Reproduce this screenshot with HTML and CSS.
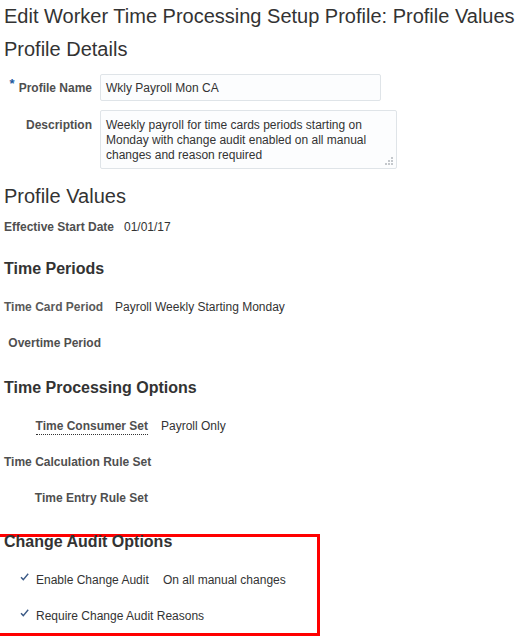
FILE: index.html
```html
<!DOCTYPE html>
<html lang="en">
<head>
<meta charset="utf-8">
<title>Edit Worker Time Processing Setup Profile</title>
<link rel="stylesheet" href="styles.css">
</head>
<body>
<main class="page">
  <h1 class="page-title">Edit Worker Time Processing Setup Profile: Profile Values</h1>

  <h2 class="section-title details-title">Profile Details</h2>
  <div class="form-grid">
    <label class="form-label"><span class="req">*</span>Profile Name</label>
    <div class="input-box">Wkly Payroll Mon CA</div>
    <label class="form-label desc-label">Description</label>
    <div class="textarea-box">Weekly payroll for time cards periods starting on Monday with change audit enabled on all manual changes and reason required
      <svg class="grip" width="8" height="8" viewBox="0 0 8 8"><rect x="6" y="0" width="2" height="2"/><rect x="3" y="3" width="2" height="2"/><rect x="6" y="3" width="2" height="2"/><rect x="0" y="6" width="2" height="2"/><rect x="3" y="6" width="2" height="2"/><rect x="6" y="6" width="2" height="2"/></svg>
    </div>
  </div>

  <h2 class="section-title values-title">Profile Values</h2>
  <div class="ro-grid eff-grid">
    <span class="ro-label bold">Effective Start Date</span>
    <span class="ro-value">01/01/17</span>
  </div>

  <h3 class="sub-title periods-title">Time Periods</h3>
  <div class="ro-grid periods-grid">
    <span class="ro-label bold light">Time Card Period</span>
    <span class="ro-value">Payroll Weekly Starting Monday</span>
    <span class="ro-label bold">Overtime Period</span>
    <span class="ro-value"></span>
  </div>

  <h3 class="sub-title options-title">Time Processing Options</h3>
  <div class="ro-grid options-grid">
    <span class="ro-label bold"><span class="dotted">Time Consumer Set</span></span>
    <span class="ro-value">Payroll Only</span>
    <span class="ro-label bold">Time Calculation Rule Set</span>
    <span class="ro-value"></span>
    <span class="ro-label bold">Time Entry Rule Set</span>
    <span class="ro-value"></span>
  </div>

  <section class="audit">
    <div class="highlight"></div>
    <h3 class="sub-title audit-title">Change Audit Options</h3>
    <div class="audit-grid">
      <svg class="check" width="9" height="8" viewBox="0 0 9 8"><path d="M1 4.2 L3.3 6.6 L8.2 0.8" fill="none" stroke="#3b5a86" stroke-width="1.4"/></svg>
      <span class="audit-label">Enable Change Audit</span>
      <span class="audit-value">On all manual changes</span>
      <svg class="check" width="9" height="8" viewBox="0 0 9 8"><path d="M1 4.2 L3.3 6.6 L8.2 0.8" fill="none" stroke="#3b5a86" stroke-width="1.4"/></svg>
      <span class="audit-label wide">Require Change Audit Reasons</span>
    </div>
  </section>
</main>
</body>
</html>
```

FILE: styles.css
```css
html, body {
  margin: 0;
  padding: 0;
  background: #ffffff;
  overflow: hidden;
}

body {
  font-family: "Liberation Sans", Arial, sans-serif;
  color: #333333;
  width: 523px;
  height: 636px;
}

.page {
  padding: 0 0 0 4px;
}

.page-title {
  margin: 4px 0 0;
  font-size: 20px;
  line-height: 24px;
  font-weight: normal;
  color: #333333;
  white-space: nowrap;
}

.section-title {
  margin: 0;
  font-size: 20px;
  line-height: 24px;
  font-weight: normal;
  color: #333333;
}

.details-title {
  margin-top: 9px;
}

.form-grid {
  display: grid;
  grid-template-columns: 88px auto;
  column-gap: 8px;
  row-gap: 9px;
  margin-top: 13px;
  justify-items: start;
}

.form-label {
  justify-self: end;
  font-size: 12px;
  font-weight: bold;
  color: #4f4f4f;
  line-height: 15px;
  padding-top: 6px;
  white-space: nowrap;
}

.desc-label {
  padding-top: 8px;
}

.req {
  color: #1c5a9e;
  font-size: 13px;
  position: relative;
  top: -4px;
  margin-right: 4px;
}

.input-box {
  box-sizing: border-box;
  width: 281px;
  height: 27px;
  border: 1px solid #dfe4e8;
  border-radius: 2px;
  background: #fcfdfe;
  font-size: 12px;
  line-height: 15px;
  padding: 6px 5px;
  color: #333333;
}

.textarea-box {
  position: relative;
  box-sizing: border-box;
  width: 297px;
  height: 59px;
  border: 1px solid #dfe4e8;
  border-radius: 2px;
  background: #fcfdfe;
  font-size: 12px;
  line-height: 15px;
  padding: 7px 5px;
  color: #333333;
}

.grip {
  position: absolute;
  right: 3px;
  bottom: 3px;
  fill: #c4c8cc;
}

.values-title {
  margin-top: 15px;
}

.ro-grid {
  display: grid;
  row-gap: 20px;
  font-size: 12px;
  line-height: 16px;
}

.ro-label {
  text-align: right;
  color: #4f4f4f;
  white-space: nowrap;
}

.ro-label.bold {
  font-weight: bold;
}

.ro-label.light {
  color: #5a5a5a;
}

.ro-value {
  color: #333333;
  white-space: nowrap;
}

.eff-grid {
  grid-template-columns: 109px auto;
  column-gap: 11px;
  margin-top: 11px;
}

.sub-title {
  margin: 0;
  font-size: 16px;
  line-height: 20px;
  font-weight: bold;
  color: #333333;
}

.periods-title {
  margin-top: 24px;
}

.periods-grid {
  grid-template-columns: 97px auto;
  column-gap: 14px;
  margin-top: 20px;
}

.options-title {
  margin-top: 27px;
}

.options-grid {
  grid-template-columns: 144px auto;
  column-gap: 13px;
  margin-top: 20px;
}

.dotted {
  border-bottom: 1px dotted #333333;
  padding-bottom: 1px;
}

.audit {
  position: relative;
  margin-top: 26px;
}

.highlight {
  position: absolute;
  left: -16px;
  top: 2px;
  width: 332px;
  height: 102px;
  box-sizing: border-box;
  border: 3px solid #ff0000;
  pointer-events: none;
}

.audit-title {
  position: relative;
}

.audit-grid {
  display: grid;
  grid-template-columns: 16px 117px auto;
  column-gap: 0;
  row-gap: 20px;
  margin-top: 20px;
  padding-left: 16px;
  font-size: 12px;
  line-height: 16px;
  align-items: start;
}

.check {
  margin-top: 1px;
}

.audit-label {
  color: #333333;
  white-space: nowrap;
}

.audit-value {
  color: #333333;
  padding-left: 10px;
  white-space: nowrap;
}

.audit-label.wide {
  grid-column: 2 / 4;
}
```
